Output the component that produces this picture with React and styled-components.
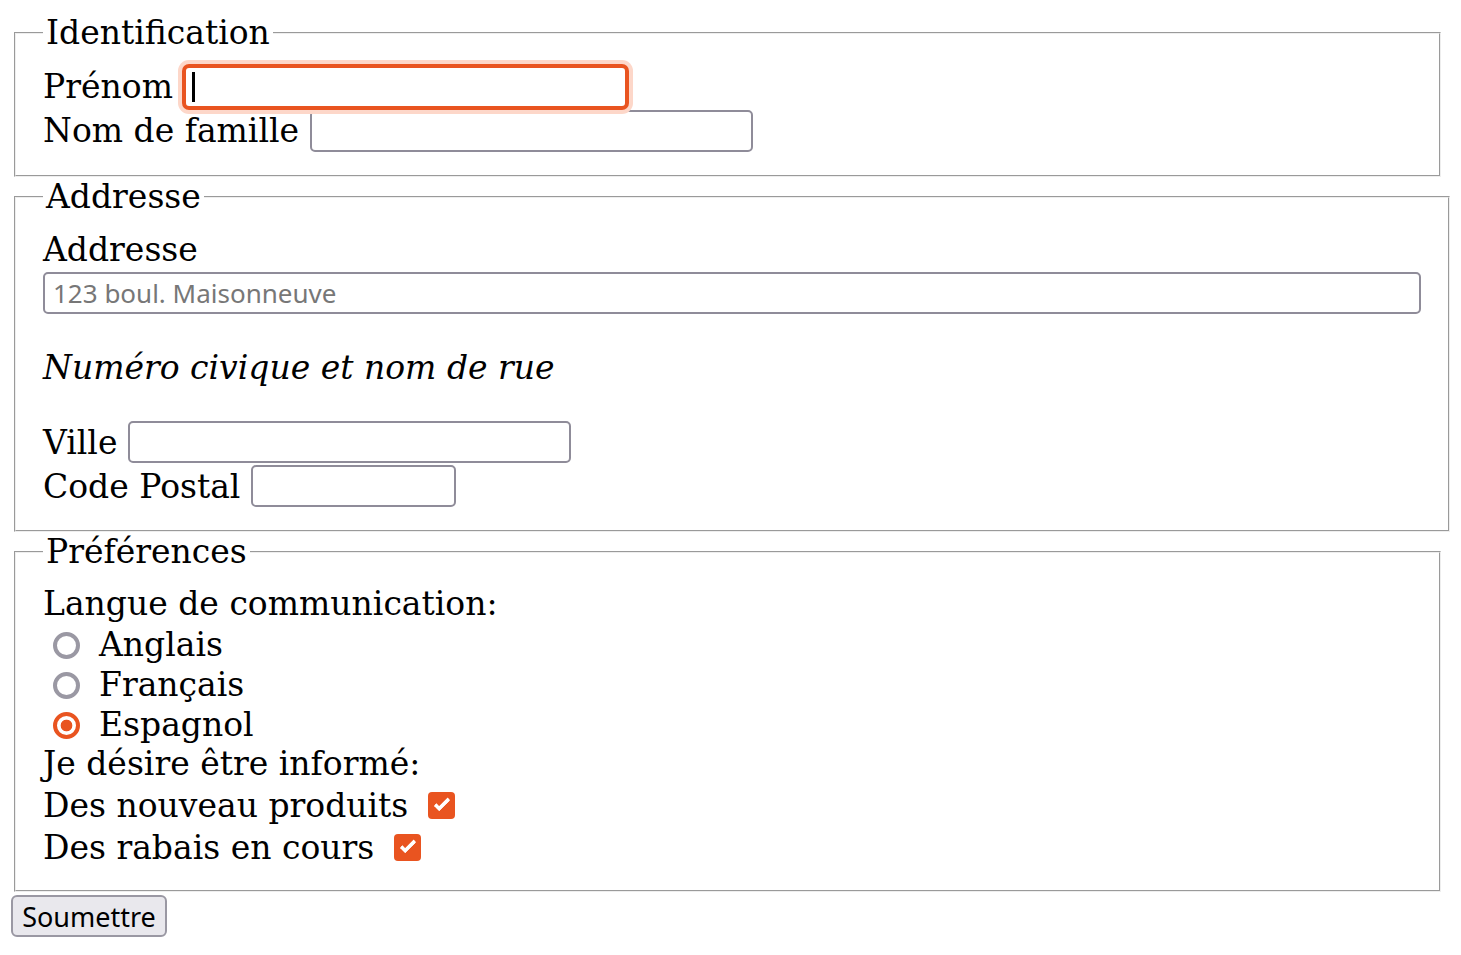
import React from "react";
import styled, { createGlobalStyle, css } from "styled-components";

const GlobalStyle = createGlobalStyle`
  html, body { margin: 0; padding: 0; background: #ffffff; }
  body {
    font-family: "DejaVu Serif", serif;
    font-size: 33px;
    color: #000000;
  }
`;

const ORANGE = "#E95420";
const WIDGET_GRAY = "#8f8c99";

const Form = styled.form`
  padding: 13px 0 0 11px;
  display: flex;
  flex-direction: column;
  align-items: flex-start;
`;

const Fieldset = styled.fieldset`
  box-sizing: border-box;
  width: ${(p) => p.$width}px;
  min-width: 0;
  margin: 0 0 0 3px;
  padding: 13px 27px 22px;
  border: 2px groove #eeeeee;
`;

const Legend = styled.legend`
  padding: 0 3px;
  font: inherit;
  line-height: 39px;
`;

const FieldRow = styled.div`
  display: flex;
  align-items: center;
  gap: 11px;
  height: 44px;
`;

const FieldLabel = styled.label`
  line-height: normal;
  white-space: nowrap;
  margin-top: ${(p) => (p.$lift ? "-2px" : "0")};
`;

const BlockLabel = styled.label`
  display: block;
  line-height: 42px;
`;

const TextInput = styled.input`
  box-sizing: border-box;
  width: ${(p) => (p.$full ? "100%" : `${p.$width || 443}px`)};
  height: 42px;
  margin: ${(p) => (p.$full ? "1px 0 0" : "0")};
  padding: 0 8px;
  border: 2px solid ${WIDGET_GRAY};
  border-radius: 5px;
  background: #ffffff;
  font-family: "Noto Sans", sans-serif;
  font-size: 26px;
  color: #000000;
  outline: none;
  caret-color: transparent;
  &::placeholder {
    color: #777777;
    opacity: 1;
  }
  ${(p) =>
    p.$focused &&
    css`
      border: 2px solid ${ORANGE};
      box-shadow: 0 0 0 2px ${ORANGE}, 0 0 0 6px #fdd7c9;
    `}
`;

const FocusWrap = styled.span`
  position: relative;
  display: flex;
`;

const Caret = styled.span`
  position: absolute;
  left: 8px;
  top: 6px;
  width: 3px;
  height: 30px;
  background: #000000;
`;

const Note = styled.p`
  margin: 34px 0 33px;
  font-style: italic;
  line-height: 39px;
`;

const TextLine = styled.div`
  height: 40px;
  line-height: 40px;
  white-space: nowrap;
`;

const RadioRow = styled.div`
  display: flex;
  align-items: center;
  gap: 19px;
  height: 40px;
  padding-left: 10px;
`;

const Radio = styled.input.attrs({ type: "radio" })`
  appearance: none;
  box-sizing: border-box;
  flex: none;
  width: 27px;
  height: 27px;
  margin: 2px 0 0;
  border-radius: 50%;
  border: 4px solid #9a98a3;
  background: #ffffff;
  &:checked {
    border-color: ${ORANGE};
    background: radial-gradient(circle, ${ORANGE} 0 5.5px, #ffffff 6.2px);
  }
`;

const CheckRow = styled.div`
  display: flex;
  align-items: center;
  gap: 20px;
  height: 42px;
`;

const Checkbox = styled.input.attrs({ type: "checkbox" })`
  appearance: none;
  position: relative;
  box-sizing: border-box;
  flex: none;
  width: 27px;
  height: 27px;
  margin: 0;
  border-radius: 4px;
  border: 2px solid ${WIDGET_GRAY};
  background: #ffffff;
  &:checked {
    border: none;
    background: ${ORANGE};
  }
  &:checked::after {
    content: "";
    position: absolute;
    box-sizing: border-box;
    left: 10px;
    top: 3px;
    width: 8px;
    height: 16px;
    border: solid #ffffff;
    border-width: 0 4px 4px 0;
    border-radius: 1.5px;
    transform: rotate(45deg);
  }
`;

const Submit = styled.button`
  box-sizing: border-box;
  width: 156px;
  height: 42px;
  margin: 3px 0 0;
  padding: 0;
  border: 2px solid #9a98a3;
  border-radius: 6px;
  background: #e9e8ed;
  font-family: "Noto Sans", sans-serif;
  font-size: 27px;
  color: #000000;
`;

export default function App() {
  return (
    <>
      <GlobalStyle />
      <Form onSubmit={(e) => e.preventDefault()}>
        <Fieldset $width={1427}>
          <Legend>Identification</Legend>
          <FieldRow>
            <FieldLabel htmlFor="prenom" $lift>Prénom</FieldLabel>
            <FocusWrap>
              <TextInput id="prenom" type="text" $focused />
              <Caret />
            </FocusWrap>
          </FieldRow>
          <FieldRow>
            <FieldLabel htmlFor="nom" $lift>Nom de famille</FieldLabel>
            <TextInput id="nom" type="text" />
          </FieldRow>
        </Fieldset>

        <Fieldset $width={1436}>
          <Legend>Addresse</Legend>
          <BlockLabel htmlFor="adresse">Addresse</BlockLabel>
          <TextInput id="adresse" type="text" placeholder="123 boul. Maisonneuve" $full />
          <Note>Numéro civique et nom de rue</Note>
          <FieldRow>
            <FieldLabel htmlFor="ville">Ville</FieldLabel>
            <TextInput id="ville" type="text" />
          </FieldRow>
          <FieldRow>
            <FieldLabel htmlFor="cp">Code Postal</FieldLabel>
            <TextInput id="cp" type="text" $width={205} />
          </FieldRow>
        </Fieldset>

        <Fieldset $width={1427}>
          <Legend>Préférences</Legend>
          <TextLine>Langue de communication:</TextLine>
          <RadioRow>
            <Radio id="l-en" name="langue" value="en" />
            <FieldLabel htmlFor="l-en">Anglais</FieldLabel>
          </RadioRow>
          <RadioRow>
            <Radio id="l-fr" name="langue" value="fr" />
            <FieldLabel htmlFor="l-fr">Français</FieldLabel>
          </RadioRow>
          <RadioRow>
            <Radio id="l-es" name="langue" value="es" defaultChecked />
            <FieldLabel htmlFor="l-es">Espagnol</FieldLabel>
          </RadioRow>
          <TextLine>Je désire être informé:</TextLine>
          <CheckRow>
            <FieldLabel htmlFor="c-prod">Des nouveau produits</FieldLabel>
            <Checkbox id="c-prod" defaultChecked />
          </CheckRow>
          <CheckRow>
            <FieldLabel htmlFor="c-rabais">Des rabais en cours</FieldLabel>
            <Checkbox id="c-rabais" defaultChecked />
          </CheckRow>
        </Fieldset>

        <Submit type="submit">Soumettre</Submit>
      </Form>
    </>
  );
}
